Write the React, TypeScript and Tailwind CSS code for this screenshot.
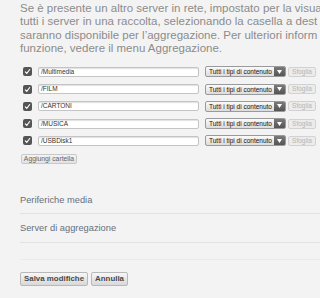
import React from 'react';

const folders = ['/Multimedia', '/FILM', '/CARTONI', '/MUSICA', '/USBDisk1'];

const CheckBox: React.FC = () => (
  <div className="w-[9px] h-[9px] rounded-[2px] bg-[#555] flex items-center justify-center shrink-0">
    <svg width="7" height="7" viewBox="0 0 7 7">
      <path d="M1.3 3.8 L2.8 5.3 L5.7 1.5" stroke="#fff" strokeWidth="1.1" fill="none" strokeLinecap="round" />
    </svg>
  </div>
);

const FolderRow: React.FC<{ path: string }> = ({ path }) => (
  <div className="flex items-center h-[17.25px]">
    <div className="w-[15px] flex justify-start pl-[3px]">
      <CheckBox />
    </div>
    <div className="ml-[3px] w-[161px] h-[10px] bg-white border border-[#c4c4c4] rounded-[2px] shadow-[inset_0_1px_1px_rgba(0,0,0,0.12)] text-[6.5px] leading-[8px] text-[#333] pl-[2px]">
      {path}
    </div>
    <div className="ml-[6px] w-[81px] h-[11px] flex rounded-[2px] border border-[#9a9a9a] overflow-hidden bg-gradient-to-b from-[#fafafa] to-[#dcdcdc]">
      <span className="flex-1 text-[6.5px] leading-[9px] text-[#111] pl-[3px] whitespace-nowrap">Tutti i tipi di contenuto</span>
      <span className="w-[11px] bg-gradient-to-b from-[#7a7a7a] to-[#555] flex items-center justify-center">
        <svg width="5" height="4" viewBox="0 0 5 4"><path d="M0 0 H5 L2.5 4 Z" fill="#fff" /></svg>
      </span>
    </div>
    <div className="ml-[2px] w-[28px] h-[10px] rounded-[2px] border border-[#d2d2d2] bg-[#ececec] text-[6.5px] leading-[8px] text-[#b5b5b5] text-center">
      Sfoglia
    </div>
  </div>
);

export default function App() {
  return (
    <div className="w-[320px] h-[298px] overflow-hidden bg-[#f3f3f3] font-['Liberation_Sans',Arial,sans-serif]">
      <div className="pl-[20px] pt-[2px] text-[11.5px] leading-[13.3px] text-[#8c8c8c] whitespace-nowrap">
        <div>Se è presente un altro server in rete, impostato per la visua</div>
        <div>tutti i server in una raccolta, selezionando la casella a dest</div>
        <div>saranno disponibile per l’aggregazione. Per ulteriori inform</div>
        <div>funzione, vedere il menu Aggregazione.</div>
      </div>
      <div className="pl-[20px] mt-[8px]">
        {folders.map((f) => (
          <FolderRow key={f} path={f} />
        ))}
        <div className="mt-[5px] ml-[1px] w-[56px] h-[10px] rounded-[2px] border border-[#c8c8c8] bg-gradient-to-b from-[#f4f4f4] to-[#e2e2e2] text-[6.8px] leading-[8px] text-[#666] text-center whitespace-nowrap">
          Aggiungi cartella
        </div>
      </div>
      <div className="pl-[20px] mt-[23px] text-[9.3px] text-[#66707a]">
        <div className="h-[26px] leading-[26px]">Periferiche media</div>
        <div className="h-[1px] bg-[#e2e2e2]" />
        <div className="h-[28px] leading-[28px]">Server di aggregazione</div>
        <div className="h-[1px] bg-[#e2e2e2]" />
        <div className="h-[16px]" />
        <div className="h-[1px] bg-[#ebebeb]" />
        <div className="flex gap-[3px] mt-[12px]">
          <div className="h-[14px] px-[3px] rounded-[2px] border border-[#b8b8b8] bg-gradient-to-b from-[#f7f7f7] to-[#d8d8d8] text-[7.9px] leading-[12px] font-bold text-[#4a4a4a] whitespace-nowrap">
            Salva modifiche
          </div>
          <div className="h-[14px] px-[3px] rounded-[2px] border border-[#b8b8b8] bg-gradient-to-b from-[#f7f7f7] to-[#d8d8d8] text-[7.9px] leading-[12px] font-bold text-[#4a4a4a] whitespace-nowrap">
            Annulla
          </div>
        </div>
      </div>
    </div>
  );
}
